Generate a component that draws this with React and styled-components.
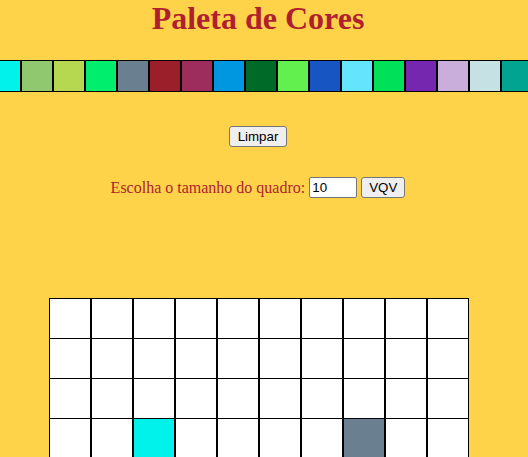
import React from 'react';
import styled, { createGlobalStyle } from 'styled-components';

const GlobalStyle = createGlobalStyle`
  html, body {
    margin: 0;
    overflow: hidden;
    background-color: #fed34a;
  }
`;

const Page = styled.main`
  width: 516px;
  display: flex;
  flex-direction: column;
  align-items: center;
  font-family: "Liberation Serif", serif;
`;

const Title = styled.h1`
  margin: 0;
  font-size: 32px;
  font-weight: 700;
  color: #b01f2e;
`;

const Palette = styled.div`
  align-self: stretch;
  display: flex;
  justify-content: center;
  padding-left: 6px;
  margin-top: 23px;
`;

const Swatch = styled.div`
  flex: none;
  width: 30px;
  height: 30px;
  border: 1px solid #000;
  background-color: ${(p) => p.$color};
`;

const Button = styled.button`
  font-family: "Liberation Sans", Arial, sans-serif;
  font-size: 13.33px;
  padding: 1px 7px;
  height: 21px;
  background: #efefef;
  border: 1px solid #767676;
  border-radius: 3px;
  color: #000;
`;

const ClearButton = styled(Button)`
  margin-top: 34px;
  padding: 1px 8px;
`;

const SizeRow = styled.div`
  margin-top: 30px;
  display: flex;
  align-items: center;
  gap: 4px;
  font-size: 16px;
  color: #b01f2e;
`;

const SizeInput = styled.input`
  width: 48px;
  height: 21px;
  box-sizing: border-box;
  padding: 1px 2px;
  font-family: "Liberation Sans", Arial, sans-serif;
  font-size: 13.33px;
  border: 1px solid #767676;
  border-radius: 2px;
  background: #fff;
`;

const Board = styled.div`
  margin-top: 100px;
  margin-left: 2px;
  display: flex;
  flex-direction: column;
`;

const BoardRow = styled.div`
  display: flex;
  height: 40px;
`;

const Pixel = styled.div`
  flex: none;
  width: 40px;
  height: 40px;
  border: 1px solid #000;
  background-color: ${(p) => p.$color || '#fff'};
`;

const colors = [
  '#00f2ea', '#90c870', '#b5d850', '#00ee6d', '#6a7f90', '#9a1f2a',
  '#9c2d5c', '#0096e0', '#006b29', '#62f04e', '#1755c3', '#64e4fd',
  '#00e058', '#7627b0', '#c9aedc', '#c6e1e3', '#00a491',
];

const painted = { '3-2': '#00f2ea', '3-7': '#6a7f90' };

export default function App() {
  const size = 10;
  return (
    <>
      <GlobalStyle />
      <Page>
        <Title>Paleta de Cores</Title>
        <Palette>
          {colors.map((c) => (
            <Swatch key={c} $color={c} />
          ))}
        </Palette>
        <ClearButton>Limpar</ClearButton>
        <SizeRow>
          <span>Escolha o tamanho do quadro:</span>
          <SizeInput type="number" defaultValue={10} />
          <Button>VQV</Button>
        </SizeRow>
        <Board>
          {Array.from({ length: size }).map((_, r) => (
            <BoardRow key={r}>
              {Array.from({ length: size }).map((__, c) => (
                <Pixel key={c} $color={painted[`${r}-${c}`]} />
              ))}
            </BoardRow>
          ))}
        </Board>
      </Page>
    </>
  );
}
